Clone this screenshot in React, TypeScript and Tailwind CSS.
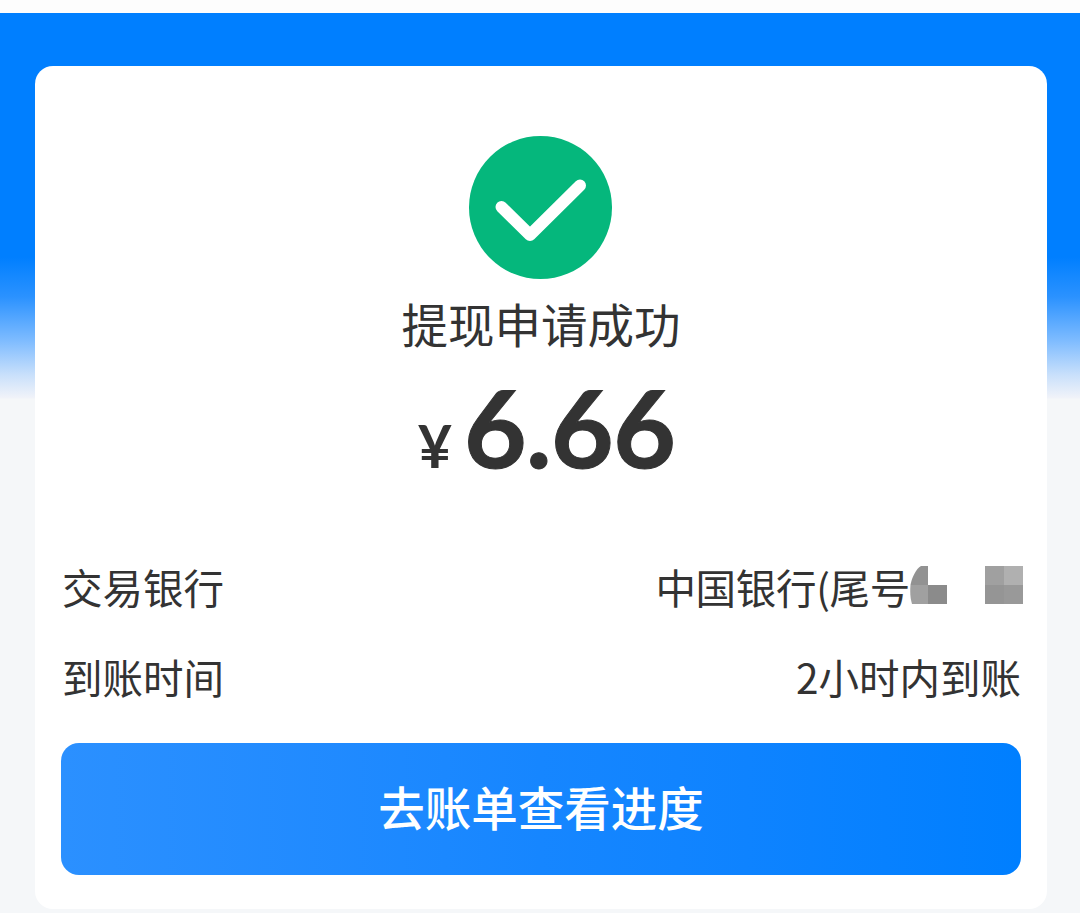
import type { ReactNode } from "react";

interface DetailRowProps {
  label: string;
  children: ReactNode;
}

function SuccessIcon() {
  return (
    <svg className="mr-[2px] size-[143px]" viewBox="0 0 143 143" fill="none">
      <circle cx="71.5" cy="71.5" r="71.5" fill="#05b77c" />
      <path
        d="M32.5 71 61 99 111 49.5"
        stroke="#ffffff"
        strokeWidth="12"
        strokeLinecap="round"
        strokeLinejoin="round"
      />
    </svg>
  );
}

// Pixelated cover over the last digits of the card number
function MaskedDigits() {
  return (
    <svg className="-mr-[2px] mb-[5px] h-[38px] w-[113px] shrink-0" viewBox="0 0 113 38">
      <path d="M11 0h7v19H0.5C2 11 6 3 11 0Z" fill="#929292" />
      <path d="M0.5 19H18v19H2C0 32 0 25 0.5 19Z" fill="#a0a0a0" />
      <rect x="18" y="19" width="19" height="19" fill="#8b8b8b" />
      <rect x="75" y="0" width="19" height="19" fill="#a0a0a0" />
      <rect x="94" y="0" width="19" height="19" fill="#b0b0b0" />
      <rect x="75" y="19" width="19" height="19" fill="#959595" />
      <rect x="94" y="19" width="19" height="19" fill="#999999" />
    </svg>
  );
}

function DetailRow({ label, children }: DetailRowProps) {
  return (
    <div className="flex h-[60px] items-center justify-between pl-px text-[40.5px] leading-[60px] whitespace-nowrap">
      <span>{label}</span>
      <div className="flex items-center">{children}</div>
    </div>
  );
}

export default function App() {
  return (
    <div className="flex h-[913px] w-[1080px] flex-col overflow-hidden bg-[#fdfdfd] pt-[13px] font-['Noto_Sans_CJK_SC',sans-serif] text-[#333333]">
      <main className="flex-1 bg-[#f5f7f9] bg-[linear-gradient(180deg,#007fff_0px,#007fff_244px,#2b92ff_284px,#7fbcff_328px,#c9e0fb_362px,#f1f3f9_385px,#f5f7f9_386px)] pt-[53px] pr-[33px] pl-[35px]">
        <section className="flex h-[843px] flex-col rounded-[18px] bg-white px-[26px] pt-[70px]">
          <div className="flex flex-col items-center">
            <SuccessIcon />
            <h1 className="mt-[14px] text-[46.5px] leading-[60px]">
              提现申请成功
            </h1>
            <div className="mt-[18px] flex h-[110px] items-baseline pl-[11px] font-['Lato',sans-serif] font-bold leading-[110px]">
              <span className="mr-3 text-[59px]">¥</span>
              <span className="text-[108px] tracking-[-0.6px] [-webkit-text-stroke:1px_#333333]">
                6.66
              </span>
            </div>
          </div>

          <div className="mt-[76px] flex flex-col gap-[30px]">
            <DetailRow label="交易银行">
              <span className="tracking-[-0.3px]">中国银行(尾号</span>
              <MaskedDigits />
            </DetailRow>
            <DetailRow label="到账时间">2小时内到账</DetailRow>
          </div>

          <button
            type="button"
            className="mt-[36px] h-[132px] w-full rounded-[18px] bg-linear-to-r from-[#2b90ff] via-[#1686ff] to-[#007fff] pb-[6px] text-[46.5px] font-medium text-white"
          >
            去账单查看进度
          </button>
        </section>
      </main>
    </div>
  );
}
